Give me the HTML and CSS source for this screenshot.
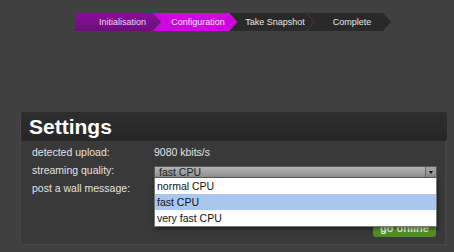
FILE: index.html
```html
<!DOCTYPE html>
<html lang="en">

<head>
    <meta charset="UTF-8">
    <meta name="viewport" content="width=device-width, initial-scale=1.0">
    <title>Settings</title>
    <link rel="stylesheet" href="styles.css">
</head>

<body>
    <ol class="steps">
        <li class="step done">Initialisation</li>
        <li class="step current">Configuration</li>
        <li class="step">Take Snapshot</li>
        <li class="step">Complete</li>
    </ol>

    <section class="panel">
        <h2 class="panel-title">Settings</h2>
        <div class="panel-body">
            <div class="row">
                <span class="label">detected upload:</span>
                <span class="value">9080 kbits/s</span>
            </div>
            <div class="row">
                <span class="label">streaming quality:</span>
                <div class="value select-wrap">
                    <div class="select">
                        <span class="select-text">fast CPU</span>
                        <span class="select-arrow"></span>
                    </div>
                    <ul class="options">
                        <li>normal CPU</li>
                        <li class="selected">fast CPU</li>
                        <li>very fast CPU</li>
                    </ul>
                </div>
            </div>
            <div class="row">
                <span class="label">post a wall message:</span>
                <span class="value"></span>
            </div>
            <div class="actions">
                <button class="go-online">go online</button>
            </div>
        </div>
    </section>
</body>

</html>
```

FILE: styles.css
```css
body {
    background-color: #404040;
    font-family: "Liberation Sans", Arial, sans-serif;
    margin: 0;
    width: 454px;
    height: 252px;
    overflow: hidden;
}

/* wizard steps */
.steps {
    display: flex;
    list-style: none;
    margin: 13px 0 0 75px;
    padding: 0;
    height: 18px;
}

.step {
    width: 84px;
    height: 18px;
    line-height: 18px;
    margin-left: -7px;
    padding-left: 6px;
    box-sizing: border-box;
    text-align: center;
    font-size: 9px;
    color: #e6e6e6;
    background-color: #292929;
    clip-path: polygon(0 0, calc(100% - 8px) 0, 100% 50%, calc(100% - 8px) 100%, 0 100%, 8px 50%);
}

.step:first-child {
    margin-left: 0;
    width: 85px;
    padding-left: 10px;
    clip-path: polygon(0 0, calc(100% - 8px) 0, 100% 50%, calc(100% - 8px) 100%, 0 100%);
}

.step.done {
    background: linear-gradient(#870f99, #6e0c7e);
    color: #f0d8f4;
}

.step.current {
    background-color: #d200e4;
    color: #fbe6fd;
}

/* settings panel */
.panel {
    margin: 81px 8px 0 20px;
    background-color: #393939;
    border: 1px solid #474747;
    border-top: none;
}

.panel-title {
    margin: 0 -2px 0 0;
    height: 29px;
    line-height: 30px;
    padding-left: 8px;
    font-size: 21px;
    font-weight: bold;
    color: #fff;
    background: linear-gradient(#2e2e2e, #262626);
    border-radius: 2px;
}

.panel-body {
    padding: 2px 8px 7px 11px;
}

.row {
    display: flex;
    height: 18px;
    line-height: 18px;
    font-size: 10.5px;
    color: #e2e2e2;
}

.label {
    width: 122px;
    flex: none;
}

.value {
    flex: 1;
}

.select-wrap {
    position: relative;
}

.select {
    display: flex;
    margin-top: 5px;
    height: 12px;
    border: 1px solid #5a5a5a;
    box-sizing: border-box;
    background: linear-gradient(#b4b4b4, #8e8e8e);
}

.select-text {
    flex: 1;
    padding-left: 4px;
    line-height: 11px;
    font-size: 10.5px;
    color: #1e1e1e;
}

.select-arrow {
    width: 10px;
    border-left: 1px solid #666;
    background: linear-gradient(#a8a8a8, #8a8a8a) no-repeat;
    position: relative;
}

.select-arrow::after {
    content: "";
    position: absolute;
    left: 3px;
    top: 4px;
    border-left: 2px solid transparent;
    border-right: 2px solid transparent;
    border-top: 3px solid #111;
}

.options {
    position: absolute;
    top: 17px;
    left: 0;
    right: 0;
    margin: 0;
    padding: 0;
    list-style: none;
    background-color: #fff;
    border: 1px solid #777;
    border-top: none;
    box-shadow: 1px 2px 4px rgba(0, 0, 0, 0.5);
    z-index: 2;
}

.options li {
    height: 16px;
    line-height: 16px;
    padding-left: 2px;
    font-size: 10.5px;
    color: #111;
}

.options .selected {
    background-color: #a9c7ee;
}

.actions {
    display: flex;
    justify-content: flex-end;
    margin-top: 22px;
}

.go-online {
    width: 63px;
    height: 18px;
    margin-right: 1px;
    border: none;
    border-radius: 3px;
    background: linear-gradient(#6aa83a, #4c8a22);
    color: #e8f4dc;
    font-family: "Liberation Sans", Arial, sans-serif;
    font-size: 11px;
    font-weight: bold;
    padding: 0;
}
```
